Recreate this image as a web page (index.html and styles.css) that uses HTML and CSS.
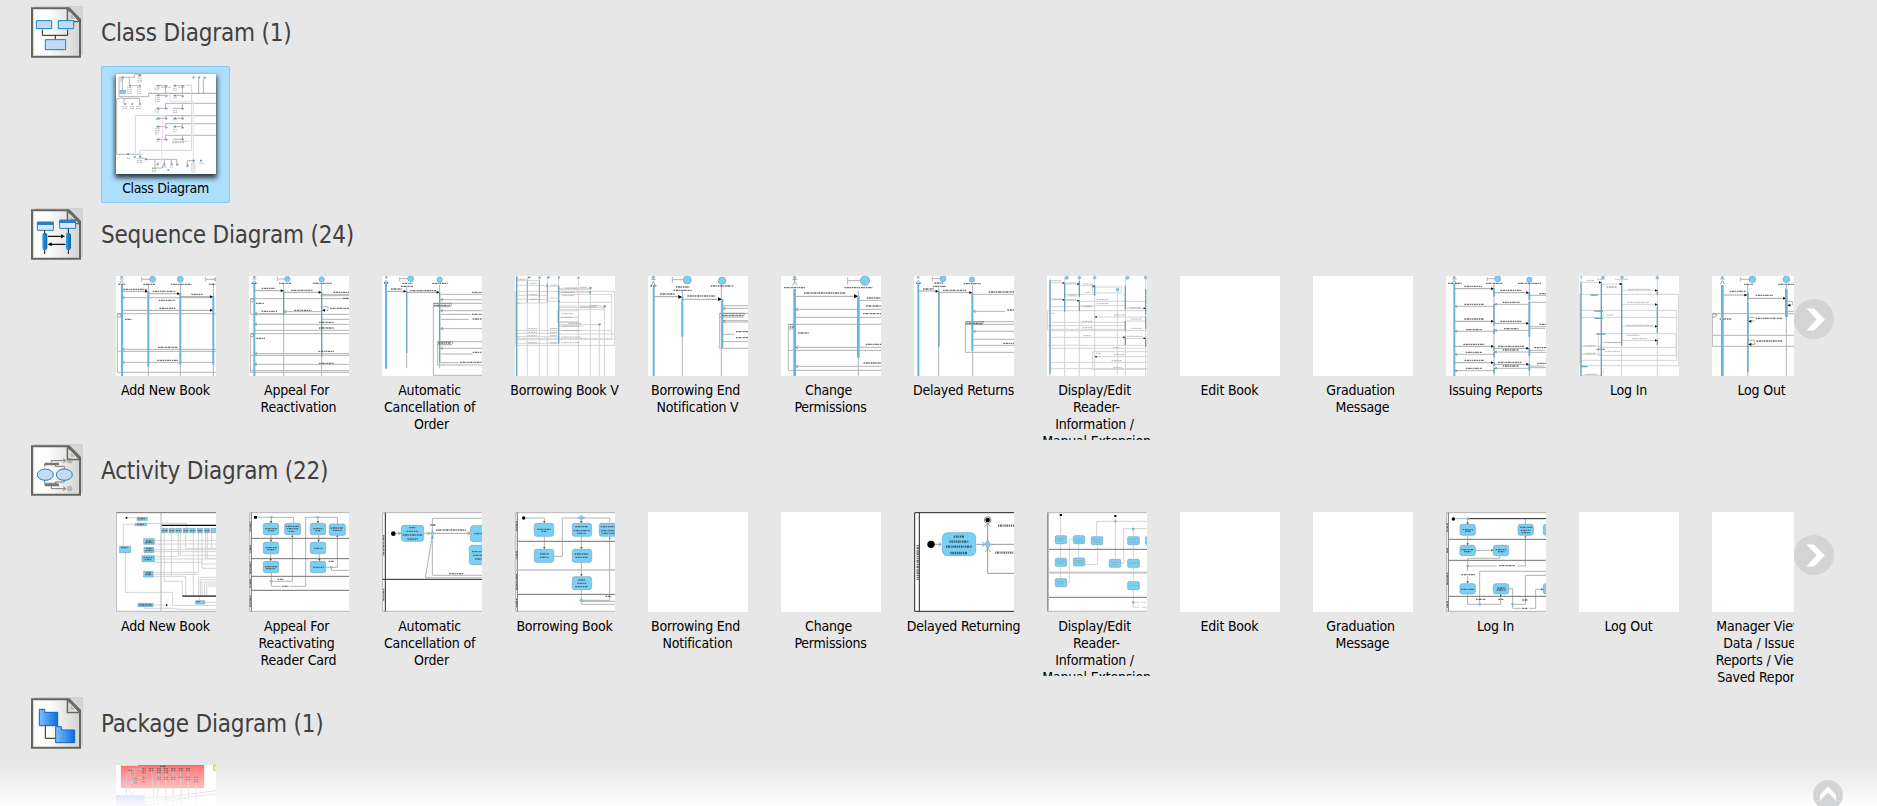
FILE: index.html
```html
<!DOCTYPE html>
<html lang="en">
<head>
<meta charset="utf-8">
<title>Diagrams</title>
<link rel="stylesheet" href="styles.css">
</head>
<body>
<svg class="defs" aria-hidden="true">
  <defs>
    <linearGradient id="paper" x1="0" x2="1"><stop offset="0" stop-color="#fff"/><stop offset=".35" stop-color="#fcfcfc"/><stop offset="1" stop-color="#d4d4d4"/></linearGradient>
    <linearGradient id="bar" x1="0" x2="1"><stop offset="0" stop-color="#3aa0e0"/><stop offset="1" stop-color="#0068b0"/></linearGradient>
    <linearGradient id="folder" x1="0" x2="1"><stop offset="0" stop-color="#7fc0ff"/><stop offset="1" stop-color="#0a6cdc"/></linearGradient>
    <g id="page">
      <path d="M12 1H154V145H12Z" fill="#d5d7d7" stroke="#c3c7c6" stroke-width="2"/>
      <path d="M3 7H114L147 40V152H3Z" fill="url(#paper)"/>
      <path d="M109 8V47H147Z" fill="#c8c8c8" stroke="#66655e" stroke-width="4"/>
      <path d="M117 20L136 40H117Z" fill="#b9b9b9" stroke="#eee" stroke-width="3"/>
      <path d="M3 7H114L147 40V152H3Z" fill="none" stroke="#66655e" stroke-width="6"/>
      <path d="M8 11V148" stroke="#bdbdb8" stroke-width="2"/>
    </g>
  </defs>
</svg>
<main class="browser">

<section class="group group-class">
  <header><svg class="icon" viewBox="0 0 156 156"><use href="#page"/>
    <g fill="#c5daf1" stroke="#0f83c9" stroke-width="3"><path d="M16 44H62V68H16ZM82 44H128V68H82ZM43 101H104V131H43Z"/></g>
    <path d="M34 71V88H110V71M73 88V99" fill="none" stroke="#222" stroke-width="3"/></svg><h2>Class Diagram (1)</h2></header>
  <ul class="items">
    <li class="item selected"><svg class="thumb" viewBox="348 222 300 300">
      <path class="g" d="M357 234V290H446V280M357 232H403V223H425M367 235V270M388 235V252M365 293L350 297V463H425M372 297V310M365 295H419V310M388 257H415M468 257H500M497 257V280M520 257H548M547 258V280M466 286H500M520 286H548M497 325V310H648M547 325V310M468 325H497M520 325H547M497 353V347H648M547 353V347M468 355H497M520 355H547M497 380V371H648M547 380V371M468 380H497M520 380H547M497 418V406H648M547 418V406M468 418H497M520 418H547M596 235V280M610 235V280M420 470L437 478H530V492M465 478V505M493 478V500M514 478V492M562 494V482H580V490M456 504H488V495"/>
      <path class="k" d="M446 280H648"/>
      <path class="pu" d="M547 256H575V451H419V465M497 347H406V468"/>
      <path class="pk" d="M495 286H511V304H580V480M497 353H488V420H485V488H470"/>
      <path class="t faint" d="M360 237h11M360 243h9M413 229h12M413 235h12M413 241h12M413 246h12M381 262h14M381 268h14M381 274h14M381 280h14M411 262h12M411 268h12M411 275h12M411 281h12M464 264h16M464 269h12M519 265h11M519 271h11M483 262h30M536 262h18M464 293h15M464 299h15M464 305h15M519 294h12M367 320h15M367 326h15M389 320h13M389 326h13M408 320h14M408 326h14M464 330h15M464 336h13M519 331h12M519 337h12M468 359h12M519 359h12M465 386h14M465 392h14M465 398h12M465 403h8M519 388h12M519 395h10M468 425h10M517 424h50M517 428h35M411 476h14M411 482h16M411 488h16M456 505h12M456 510h12M456 515h12M573 492h13M573 498h13M573 504h13M573 510h13M558 500h9M488 501h12M510 501h9M597 490h14M380 475h10M574 516h12"/>
      <path class="d" d="M472 257h6M496 258h6M522 257h6M545 258h6M472 286h6M496 288h6M522 287h6M545 289h6M472 325h6M496 326h6M545 326h6M472 355h6M496 356h6M522 355h6M545 356h6M472 380h6M496 383h6M522 380h6M545 383h6M472 418h6M496 419h6M545 418h6M416 226h6M365 232h6M387 257h6M416 257h6M372 312h6M394 312h6M417 312h6M578 232h6M595 232h6M611 233h6M381 462h6M401 471h6M417 470h6M435 478h6M470 493h6M490 493h6M512 493h6M529 494h6M560 496h6M578 482h6M600 482h6M502 510h6"/>
      <path class="n" d="M360 271H377V280H360Z"/></svg><p class="label">Class Diagram</p></li>
  </ul>
</section>

<section class="group group-sequence">
  <header><svg class="icon" viewBox="0 0 156 156"><use href="#page"/>
    <path d="M19 42H67V67H19ZM86 36H134V61H86Z" fill="#dce8f8" stroke="#1f80c8" stroke-width="3"/>
    <path d="M19 42H67V51H19ZM86 36H134V45H86Z" fill="#287fc7"/>
    <path d="M41 68V138M112 62V138" stroke="#111" stroke-width="3"/>
    <path d="M36 75h10l3 5v40l-4 6h-8l-3-6V80Z" fill="url(#bar)"/><path d="M107 75h10l3 5v40l-4 6h-8l-3-6V80Z" fill="url(#bar)"/>
    <path d="M51 85H92M60 109H103" stroke="#111" stroke-width="4"/><path d="M90 79l12 6-12 6zM62 103l-12 6 12 6z"/></svg><h2>Sequence Diagram (24)</h2></header>
  <div class="strip">
  <ul class="items">
    <li class="item"><svg class="thumb" viewBox="348 228 300 300">
      <path class="g" d="M445 250V528M541 250V528M640 250V528M366 293H640M366 448H648M366 487H640M425 231V245M425 238H450M616 231V245M616 238H642M648 341H352V517H648M352 454H648"/>
      <path class="k" d="M366 274H440M445 281H536M541 290H636M366 331H636M360 250L365 242L370 250M360 237H370M353 342h10v9h-10"/>
      <path class="f" d="M445 274l-10-4v8zM541 281l-10-4v8zM640 290l-10-4v8zM640 331l-10-4v8z"/><path class="k" d="M374 289l-8 4 8 4M374 444l-8 4 8 4M374 483l-8 4 8 4"/>
      <path class="b" d="M366 255V528M445 273V500M541 280V494M640 289V494"/>
      <path class="t" d="M355 253h22M430 253h35M512 253h64M627 253h21M370 268h70M458 274h68M574 283h34M476 301h48M478 325h48M375 358h22M474 442h58M472 481h62"/>
      <g class="n"><circle cx="458" cy="238" r="9"/><circle cx="541" cy="238" r="9"/><circle cx="648" cy="238" r="5"/><circle cx="365" cy="231" r="3"/></g></svg><p class="label">Add New Book</p></li>

    <li class="item"><svg class="thumb" viewBox="747 228 300 300">
      <path class="g" d="M851 250V528M965 250V528M832 230V243M832 237H855M965 283H1047M965 287H1047M1047 296H751V343H1047M763 341H851M851 335H965M763 373H1047M965 358H1047M763 391H1047M1047 401H751V517H1047M763 461H1047M751 466H1047M763 493H1047M751 512H1047M968 320H984V331H970"/>
      <path class="k" d="M763 272H848M851 277H961M757 250L763 242L769 250M757 237H769M752 297h9v8h-9M752 402h9v8h-9"/>
      <path class="f" d="M851 272l-9-4v8zM965 277l-9-4v8zM966 331l9-4v8z"/><path class="k" d="M771 337l-8 4 8 4M859 331l-8 4 8 4M771 369l-8 4 8 4M771 457l-8 4 8 4M771 489l-8 4 8 4"/>
      <path class="b" d="M763 250V528"/><path class="b2" d="M851 270V344M965 277V470"/>
      <path class="t" d="M754 250h18M837 250h36M939 250h56M785 265h42M873 271h66M1000 277h47M1030 295h15M768 310h24M785 334h46M883 331h52M990 325h57M957 367h45M957 384h45M769 415h26M955 454h47M957 490h45"/>
      <g class="n"><circle cx="862" cy="237" r="8"/><circle cx="965" cy="238" r="8"/><circle cx="763" cy="231" r="3"/></g></svg><p class="label">Appeal For 
Reactivation</p></li>

    <li class="item"><svg class="thumb" viewBox="36 33 300 300">
      <path class="g" d="M110 65V310M209 60V310M89 36V48M89 41H118M212 88H336M212 104H336M212 137H336M212 148H302M212 163H296M212 191H336M212 250H336M212 267H308M212 293H264M336 115H190V331H336M336 230H203V300H336"/>
      <path class="k" d="M49 79H106M110 82H206M43 55L49 46L55 55M190 115h54v6l-5 4h-49M203 230h45v5l-4 4h-41M219 100l-7 4 7 4M219 133l-7 4 7 4M219 187l-7 4 7 4M219 246l-7 4 7 4"/>
      <path class="f" d="M110 79l-9-4v8zM209 82l-9-4v8z"/>
      <path class="b" d="M48 57V311"/><path class="b2" d="M110 78V264M209 82V294"/>
      <path class="t" d="M42 54h12M97 55h30M93 64h36M187 55h46M63 72h32M120 77h78M306 82h30M192 121h50M306 148h30M308 162h28M205 234h37M308 262h28M270 292h66"/>
      <g class="n"><circle cx="122" cy="41" r="9"/><circle cx="209" cy="44" r="8"/><circle cx="49" cy="37" r="3"/></g></svg><p class="label">Automatic 
Cancellation of 
Order</p></li>

    <li class="item"><svg class="thumb" viewBox="435 33 300 300">
      <path class="g2" d="M440 36V333M472 36V333M508 36V333M532 36V333M566 36V333M625 36V333M661 66V333M688 178V333M703 120V333M440 47H508M440 61H532M440 91H532M440 103H532M440 114H532M532 64H566M532 99H566M532 109H566M566 70H660M566 74H660M566 82H660M734 79H436V241H734V79M567 88H725V220H436M567 123H705M567 128H705M567 134H705M567 112H725M567 157H625M567 170H625M567 179H688M567 184H625M567 196H725M567 207H734M436 196H566M436 205H566M436 215H566M436 224H566M436 235H566M567 223H734M562 137H625V173H562Z"/>
      <path class="b2" d="M440 40V333M566 62V236"/><path class="b3" d="M472 46V112M508 46V112M532 54V112"/>
      <path class="t2" d="M443 43h27M478 55h25M478 89h25M478 103h25M540 60h24M585 69h40M630 67h20M575 82h40M575 92h40M660 122h26M630 126h50M575 146h35M575 157h35M595 175h40M575 183h60M475 191h26M540 191h22M475 202h26M540 202h22M475 212h26M540 212h22M475 233h26M540 233h22M575 197h55M575 216h58M575 233h54M438 115h10M438 86h10"/>
      <path class="d" d="M474 37h7M506 38h6M532 37h7M564 37h5M623 38h5M658 69h7M658 82h5M701 124h7M685 178h7M530 63h4M564 109h5M438 37h5"/></svg><p class="label">Borrowing Book V</p></li>

    <li class="item"><svg class="thumb" viewBox="834 33 300 300">
      <path class="g" d="M937 75V333M1054 60V333M907 35V54M907 44H942M1058 122H1134M1058 130H1134M1058 167H1134M1058 171H1134M1058 208H1094M1058 230H1134M1134 145H1049V250H1134"/>
      <path class="k" d="M852 95H932M937 103H1049M844 62L850 49L857 62M844 44H857M1049 145h75l-5 11h-70M1067 126l-8 4 8 4M1067 165l-8 4 8 4"/>
      <path class="f" d="M937 96l-12-6v11zM1056 103l-12-6v11z"/>
      <path class="b" d="M851 66V333M937 94V215M1057 102V248"/>
      <path class="t" d="M841 63h18M917 66h41M911 76h54M1022 63h68M870 87h45M952 93h86M1056 151h62M1098 200h36M1098 218h36"/>
      <g class="n"><circle cx="952" cy="45" r="12"/><circle cx="1056" cy="47" r="11"/><circle cx="850" cy="37" r="4"/></g></svg><p class="label">Borrowing End 
Notification V</p></li>

    <li class="item"><svg class="thumb" viewBox="63 33 300 300">
      <path class="g" d="M295 75V333M263 36V59M263 47H302M298 106H363M107 133H363M107 157H363M85 178H363M107 247H363M85 256H363M107 304H363M363 316H85V178"/>
      <path class="k" d="M107 94H288M97 62L104 51L112 62M97 44H112M104 40V52M86 179h16v8l-4 5h-12"/>
      <path class="f" d="M295 94l-13-6v12z"/><path class="k" d="M115 128l-8 5 8 5M115 242l-8 5 8 5M115 299l-8 5 8 5"/>
      <path class="b w" d="M104 72V333M295 94V278"/>
      <path class="t" d="M72 68h64M253 68h86M132 84h125M320 99h43M318 123h45M309 146h54M89 186h12M114 204h32M317 238h46M311 294h52"/>
      <g class="n"><circle cx="315" cy="47" r="14"/><circle cx="104" cy="38" r="4"/></g></svg><p class="label">Change 
Permissions</p></li>

    <li class="item"><svg class="thumb" viewBox="462 33 300 300">
      <path class="g" d="M536 67V333M638 60V333M517 35V48M517 41H542M640 88H762M640 139H735M640 178H762M640 199H762M640 223H762M640 241H762M762 170H616V262H762"/>
      <path class="k" d="M475 78H530M536 82H632M468 55L475 46L482 55M616 170h55l-4 8h-51M647 135l-7 4 7 4M647 195l-7 4 7 4"/>
      <path class="f" d="M536 79l-9-4v8zM637 83l-9-4v8z"/>
      <path class="b" d="M475 57V333M637 83V257"/><path class="b2" d="M537 79V245"/>
      <path class="t" d="M468 55h14M523 54h28M518 64h40M611 56h52M489 72h32M549 76h72M686 81h76M742 135h20M618 175h50M730 235h32"/>
      <g class="n"><circle cx="549" cy="41" r="9"/><circle cx="636" cy="44" r="8"/><circle cx="475" cy="37" r="3"/></g></svg><p class="label">Delayed Returns</p></li>

    <li class="item"><svg class="thumb" viewBox="861 33 300 300">
      <path class="g2" d="M870 40V333M914 40V333M958 40V333M1004 40V333M1072 76V330M1096 40V333M1157 40V333M870 53H914M914 57H958M958 62H1004M914 93H958M914 88H1004M870 104H914M914 107H958M958 109H1157M958 122H1096M870 125H1004M1096 130H1157M997 66H1084V84H997ZM1161 137H863V197H1161M870 172H1096M863 182H1096M870 193H1096M1004 156H1157M1096 168H1157M870 217H1096M1096 220H1157M863 241H1161M870 250H1161M1161 260H998V313H1161M1004 275H1161M870 292H1161M870 311H1161"/>
      <path class="b2" d="M870 45V328M914 54V140M958 47V95M958 105V137M1004 60V92M1096 62V134M1157 72V150M1096 215V240M1157 154V192M1157 218V245M1096 168V197"/>
      <path class="t2" d="M874 47h30M920 54h28M970 57h30M874 102h30M920 104h28M975 82h16M1010 104h36M1010 116h36M974 125h20M1108 128h34M1062 150h35M967 169h30M967 188h30M1112 162h34M1112 190h34M970 212h24M1102 214h46M1059 248h18M1055 287h30M1060 308h26M1062 269h34M872 145h12M1008 265h14M926 90h20"/>
      <path class="f" d="M914 54l-6-3v6zM958 57l-6-3v6zM1004 64l-6-3v6zM1157 130l-6-3v6zM914 104l-6-3v6zM958 107l-6-3v6zM1096 217l-6-3v6zM1157 220l-6-3v6zM1004 156l6-3v6zM1004 275l6-3v6z"/>
      <g class="n"><circle cx="920" cy="38" r="5"/><circle cx="958" cy="38" r="4"/><circle cx="1004" cy="38" r="4"/><circle cx="1102" cy="38" r="5"/><circle cx="1157" cy="38" r="4"/><circle cx="1073" cy="74" r="4"/></g></svg><p class="label">Display/Edit 
Reader-
Information / 
Manual Extension</p></li>

    <li class="item"><div class="thumb"></div><p class="label">Edit Book</p></li>
    <li class="item"><div class="thumb"></div><p class="label">Graduation 
Message</p></li>

    <li class="item"><svg class="thumb" viewBox="48 33 300 300">
      <path class="g" d="M192 55V333M298 55V333M172 36V48M172 41H198M300 91H348M192 118H298M75 124H192M300 112H348M300 185H348M300 190H345M192 196H298M75 199H192M300 256H345M300 262H348M192 261H298M75 268H192M300 303H345M300 308H348M192 310H298M75 317H192"/>
      <path class="k" d="M75 71H188M194 83H294M75 169H188M194 175H294M75 244H188M194 250H294M75 293H188M194 298H294M67 56L73 46L80 56M67 42H80M82 121l-7 3 7 3M82 196l-7 3 7 3M82 265l-7 3 7 3M82 314l-7 3 7 3M201 115l-7 3 7 3M201 193l-7 3 7 3M201 258l-7 3 7 3M201 307l-7 3 7 3"/>
      <path class="f" d="M192 71l-9-4v8zM298 83l-9-4v8zM192 169l-9-4v8zM298 175l-9-4v8zM192 244l-9-4v8zM298 250l-9-4v8zM192 293l-9-4v8zM298 298l-9-4v8z"/>
      <path class="b" d="M73 57V333M298 82V104M298 111V215M298 250V272M298 297V317"/><path class="b2" d="M192 69V95M192 117V182M192 192V207M192 243V257M192 261V276M192 291V303M192 309V325"/>
      <path class="t" d="M54 55h42M168 55h51M264 55h71M103 64h53M211 76h65M328 86h20M218 112h52M103 118h59M103 162h58M211 169h65M328 178h20M222 191h44M108 194h49M100 238h64M204 244h78M313 248h35M218 255h48M107 262h50M103 286h60M204 292h72M322 295h26M218 303h50M107 310h50"/>
      <g class="n"><circle cx="203" cy="41" r="9"/><circle cx="298" cy="44" r="8"/><circle cx="73" cy="37" r="3"/></g></svg><p class="label">Issuing Reports</p></li>

    <li class="item"><svg class="thumb" viewBox="447 33 300 300">
      <path class="g2" d="M453 40V333M514 40V333M575 40V333M682 40V333M448 88H746V302H448ZM448 136H740V286H448M448 157H740M505 206H738V271H505ZM505 247H738M514 57H575M577 76H682M577 118H682M577 184H682M577 226H682M453 52H514M514 233H575M453 244H514M453 268H514M453 331H514M520 145V152H514M520 317V323H514"/>
      <path class="b2" d="M453 52V333M514 52V333M575 55V242M682 75V90M682 118V204M682 224V240M481 90H503M493 138H519M493 160H519M499 207H526M499 253H526M450 305H473"/>
      <path class="t2" d="M470 46h22M530 65h30M530 68h30M595 73h64M592 112h66M588 181h80M528 150h22M590 211h40M606 221h46M526 232h50M526 259h44M464 242h32M464 265h34M466 328h36M556 43h40M502 43h24"/>
      <path class="f" d="M577 57l-8-4v8zM682 76l-7-3v7zM682 118l-7-3v7zM682 184l-7-3v7zM682 226l-7-3v7zM514 52l-7-3v7z"/>
      <g class="n"><circle cx="519" cy="37" r="4"/><circle cx="576" cy="37" r="4"/><circle cx="682" cy="38" r="4"/><circle cx="454" cy="36" r="2"/></g></svg><p class="label">Log In</p></li>

    <li class="item"><svg class="thumb" viewBox="846 33 300 300">
      <path class="g" d="M953 60V333M1069 60V333M931 36V49M931 43H958M1072 109H1088V121M1072 139H1092M1146 146H847V244H1146M847 211H1146M954 157H974M954 169V157M954 226H974V239"/>
      <path class="k" d="M880 90H946M954 100H1064M871 58L877 47L884 58M871 42H884M848 147h11v6l-4 3h-7M974 168H962M974 238H962M1084 121H1075"/>
      <path class="f" d="M953 90l-10-4v8zM1069 100l-10-4v8zM954 169l10-4v8zM954 238l10-4v8zM1071 121l10-4v8z"/>
      <path class="b w" d="M877 60V158M877 165V333M1069 72V156"/><path class="b2" d="M954 82V107M954 111V322"/>
      <path class="t" d="M942 58h27M1044 58h50M899 79h50M977 91h52M977 160h80M869 162h34M979 228h78"/>
      <g class="n"><circle cx="967" cy="43" r="10"/><circle cx="1069" cy="43" r="10"/><circle cx="877" cy="37" r="3"/></g></svg><p class="label">Log Out</p></li>
  </ul>
  <button class="next" aria-label="Next"><svg viewBox="0 0 40 40"><path d="M12.5 9.5H20L31 20.5L20 31.5H12.5L22.5 20.5Z"/></svg></button>
  </div>
</section>

<section class="group group-activity">
  <header><svg class="icon" viewBox="0 0 156 156"><use href="#page"/>
    <path d="M61 55V50H102M41 68V60H80M73 62V67H100V76M41 107V118H80M61 124V134H102M73 122V114H100V106" fill="none" stroke="#7c7c78" stroke-width="3"/>
    <path d="M41 60H84M41 123H84" stroke="#777" stroke-width="7"/>
    <path d="M96 44l9 6-9 6M96 128l9 6-9 6" fill="none" stroke="#888" stroke-width="3"/>
    <g fill="none" stroke="#888" stroke-width="2"><circle cx="116" cy="50" r="7"/><circle cx="116" cy="50" r="3"/><circle cx="116" cy="134" r="7"/><circle cx="116" cy="134" r="3"/></g>
    <g fill="#c5daf1" stroke="#0f83c9" stroke-width="3"><ellipse cx="43" cy="92" rx="24" ry="17"/><ellipse cx="100" cy="92" rx="24" ry="17"/></g></svg><h2>Activity Diagram (22)</h2></header>
  <div class="strip">
  <ul class="items">
    <li class="item"><svg class="thumb" viewBox="348 231 300 300">
      <path class="g2" d="M493 292V439H547V482M514 292V424H557V482M535 292V361H648M541 292V361M557 292V340H648M580 292V482M595 292V412H460M606 292V400H648M617 292V370H648M622 292V370M635 292V340M463 316H648M463 327H648M461 344H648M461 350H648M463 364H535M463 372H648M463 382H606V387H648M460 418H595M458 424H514M596 482V427H648M601 482V434H648M606 482V441H648M613 482V447H648M620 482V453H648M376 352V472H518V511H648M370 335V268H405M440 265H560V280M418 256V264M382 248H410M598 485V495M614 502H648M458 510H500M432 513V520H530V523H648"/>
      <path class="g" d="M349 529V233M648 529H349M483 233V529"/><path class="gd" d="M349 233H648"/>
      <path class="f" d="M485 269H648V273H485ZM377 246h5v5h-5zM498 508h4v4h-4z"/><path class="f soft" d="M547 481H648V486H547Z"/>
      <path class="n" d="M411 247H442V256H411ZM405 265H440V272H405ZM485 280H503V293H485ZM507 280H523V293H507ZM527 280H544V293H527ZM549 280H565V293H549ZM569 280H586V293H569ZM592 280H608V293H592ZM613 280H629V293H613ZM633 280H648V293H633ZM431 311H463V328H431ZM432 337H461V353H432ZM426 362H463V380H426ZM431 409H459V426H431ZM359 334H392V353H359ZM414 505H459V515H414ZM587 497H614V507H587Z"/>
      <path class="t" d="M415 251h22M412 268h20M363 338h20M438 318h20M436 323h24M438 341h20M436 347h24M430 368h30M434 374h22M438 414h16M436 419h18M418 510h38M590 500h10M487 287h14M509 287h12M529 287h12M551 287h12M571 287h12M594 287h12M615 287h12"/></svg><p class="label">Add New Book</p></li>

    <li class="item"><svg class="thumb" viewBox="747 231 300 300">
      <path class="g" d="M768 247H881V264M814 250V264M877 300V439H814M813 300V320M812 357V378M814 414V454H842M870 454H917V247H1012V267M954 250V264M956 300V320M958 357V378M977 397H1012V300M994 400V406H1047"/>
      <path class="g" d="M1047 233H748V529H1047"/><path class="gd" d="M754 233V529M754 310H1047M754 371H1047M754 424H1047M754 466H1047"/>
      <g class="n"><rect x="790" y="265" width="46" height="34" rx="6"/><rect x="854" y="265" width="48" height="34" rx="6"/><rect x="931" y="265" width="46" height="34" rx="6"/><rect x="988" y="267" width="48" height="34" rx="6"/><rect x="790" y="322" width="46" height="34" rx="6"/><rect x="931" y="322" width="46" height="34" rx="6"/><rect x="790" y="379" width="46" height="34" rx="6"/><rect x="931" y="379" width="46" height="34" rx="6"/><path d="M814 243l4 4-4 4-4-4zM953 243l4 4-4 4-4-4zM814 435l4 4-4 4-4-4zM994 393l4 4-4 4-4-4z"/></g>
      <path class="f" d="M762 243h9v8h-9z"/><path class="f soft" d="M813 265l-4-7h8zM954 265l-4-7h8zM813 321l-4-7h8zM956 321l-4-7h8zM812 378l-4-7h8zM958 378l-4-7h8zM877 300l-3 6h6zM1012 300l-3 6h6z"/>
      <path class="t" d="M795 281h38M804 287h20M857 274h40M860 281h34M866 289h18M940 281h30M946 287h16M992 279h38M998 286h28M797 338h34M802 344h24M942 340h26M795 395h38M798 401h28M940 397h32M986 379h15M833 433h18M846 454h20M751 260v30M751 330v24M751 380v36M751 432v26M751 482v34"/></svg><p class="label">Appeal For 
Reactivating 
Reader Card</p></li>

    <li class="item"><svg class="thumb" viewBox="36 36 300 300">
      <path class="g" d="M336 226H187V108L166 233H336M187 95V55H336M78 100H92M162 100H180"/><path class="g" d="M336 38H38V334H336"/>
      <path class="k" d="M193 100H298M292 95l8 5-8 5M84 96l8 4-8 4M172 95l8 5-8 5M184 116l3-8 4 8"/>
      <path class="kk" d="M46 38V334M38 238H336"/>
      <g class="n"><rect x="94" y="76" width="67" height="48" rx="9"/><rect x="301" y="77" width="50" height="48" rx="9"/><rect x="298" y="136" width="50" height="58" rx="9"/><path d="M187 92l5 8-5 8-5-8z"/></g>
      <circle class="f" cx="70" cy="101" r="7"/>
      <path class="t" d="M117 83h20M110 94h34M98 105h60M112 117h32M180 75h18M198 90h90M312 101h24M306 155h30M309 166h27M315 177h21M238 221h44M41 105v62M41 266v38"/></svg><p class="label">Automatic 
Cancellation of 
Order</p></li>

    <li class="item"><svg class="thumb" viewBox="435 36 300 300">
      <path class="g" d="M461 54H523V68M523 110V146M552 169H577V54H719V68M634 56V68M634 110V146M634 188V228M634 270V298M634 303V313H735M634 301H719V112M634 304H735"/>
      <path class="g" d="M735 38H436V334H735"/><path class="gd" d="M442 38V334M442 124H735M442 283H735"/><path class="gb" d="M436 210H735"/>
      <g class="n"><rect x="493" y="70" width="58" height="39" rx="7"/><rect x="607" y="70" width="58" height="39" rx="7"/><rect x="688" y="70" width="58" height="39" rx="7"/><rect x="493" y="148" width="58" height="39" rx="7"/><rect x="607" y="148" width="58" height="39" rx="7"/><rect x="607" y="230" width="58" height="39" rx="7"/><path d="M634 45l3 5 7 3-7 3-3 5-3-5-7-3 7-3zM634 296l5 5-5 5-5-5z"/></g>
      <circle class="f" cx="461" cy="54" r="5"/><path class="f soft" d="M523 69l-4-6h8zM634 69l-4-6h8zM523 147l-4-6h8zM634 147l-4-6h8zM634 229l-4-6h8zM719 111l-3 5h6z"/>
      <path class="t" d="M502 88h40M514 94h16M616 80h36M611 92h48M621 100h26M692 80h43M693 92h42M695 100h40M510 162h26M509 172h26M614 162h42M616 172h38M625 240h20M622 250h28M616 260h36M706 289h18M440 64v30M440 154v24M440 222v50M440 296v26"/></svg><p class="label">Borrowing Book</p></li>

    <li class="item"><div class="thumb"></div><p class="label">Borrowing End 
Notification</p></li>
    <li class="item"><div class="thumb"></div><p class="label">Change 
Permissions</p></li>

    <li class="item"><svg class="thumb" viewBox="102 36 300 300">
      <path class="g s" d="M331 133H402M323 145V220H402M323 120V72M164 133H182M288 133H313"/>
      <path class="k" d="M176 127l8 6-8 6M306 126l9 7-9 7M315 80l8-9 9 9M315 156l8-9 9 9"/>
      <path class="kk" d="M402 38H104V334H402M118 38V334"/>
      <g class="n"><rect x="187" y="98" width="100" height="69" rx="15"/><path d="M323 119l8 14-8 14-8-14z"/></g>
      <circle class="f" cx="153" cy="133" r="11"/><circle class="ring" cx="323" cy="60" r="10"/><circle class="f" cx="323" cy="60" r="7"/>
      <path class="t bold" d="M221 110h32M208 125h58M198 140h78M211 159h52M354 77h48M345 158h57M113 135v105"/></svg><p class="label">Delayed Returning</p></li>

    <li class="item"><svg class="thumb" viewBox="501 36 300 300">
      <path class="g2" d="M542 48V105M542 132V174M542 201V234M562 247H568V118H578M596 132V172M614 193H653V136M650 108V64H801M706 50V176M723 190H731V86H801M760 90V108M760 134V176M760 202V242M760 270V322H778M765 307H778M785 322H800"/>
      <path class="g" d="M801 38H502V334H801"/><path class="gd" d="M504 38V334M507 148H801M507 292H801"/><path class="gb" d="M507 218H801"/>
      <g class="n"><rect x="526" y="107" width="34" height="24" rx="4"/><rect x="580" y="107" width="34" height="24" rx="4"/><rect x="634" y="110" width="34" height="24" rx="4"/><rect x="743" y="110" width="35" height="24" rx="4"/><rect x="797" y="110" width="35" height="24" rx="4"/><rect x="526" y="175" width="34" height="24" rx="4"/><rect x="580" y="174" width="34" height="24" rx="4"/><rect x="688" y="178" width="34" height="24" rx="4"/><rect x="743" y="178" width="35" height="24" rx="4"/><rect x="526" y="236" width="34" height="24" rx="4"/><rect x="743" y="245" width="35" height="24" rx="4"/><path d="M706 60l4 4-4 4-4-4zM760 83l4 4-4 4-4-4zM760 303l4 4-4 4-4-4z"/></g>
      <path class="f" d="M539 42h7v6h-7zM703 45h6v6h-6z"/>
      <path class="t2" d="M530 116h26M534 122h16M584 117h24M586 124h22M638 120h26M640 127h20M748 118h24M748 126h24M530 184h26M534 190h16M584 182h26M584 188h26M694 187h22M697 193h16M748 190h26M530 245h26M535 251h16M750 257h20M785 307h12"/></svg><p class="label">Display/Edit 
Reader-
Information / 
Manual Extension</p></li>

    <li class="item"><div class="thumb"></div><p class="label">Edit Book</p></li>
    <li class="item"><div class="thumb"></div><p class="label">Graduation 
Message</p></li>

    <li class="item"><svg class="thumb" viewBox="48 36 300 300">
      <path class="g" d="M70 56H113V72M113 108V134M136 151H190M209 168V175H113V198H200M262 198H286V108M113 201V214M113 228V249M113 283V313H212V283M149 310V214H348M236 266H248V325H275M298 325H317V268H340M248 313H286V226H348M286 72V56"/>
      <path class="g" d="M348 38H49V334H348"/><path class="gd" d="M55 38V334M55 118H348M55 181H348M55 289H348"/><path class="kk" d="M113 56H348"/>
      <g class="n"><rect x="90" y="73" width="46" height="33" rx="7"/><rect x="264" y="73" width="46" height="33" rx="7"/><rect x="340" y="73" width="46" height="33" rx="7"/><rect x="90" y="136" width="46" height="31" rx="7"/><rect x="190" y="136" width="46" height="31" rx="7"/><rect x="90" y="251" width="46" height="31" rx="7"/><rect x="190" y="251" width="46" height="31" rx="7"/><rect x="340" y="251" width="46" height="31" rx="7"/><path d="M113 52l4 4-4 4-4-4zM113 194l4 4-4 4-4-4zM149 309l4 4-4 4-4-4zM248 309l4 4-4 4-4-4z"/></g>
      <circle class="f" cx="70" cy="57" r="5"/><path class="f soft" d="M113 73l-4-6h8zM113 136l-4-6h8zM113 250l-4-6h8zM190 151l-6-4v8zM340 268l-6-4v8zM286 107l-3 5h6zM212 283l-3 5h6z"/>
      <path class="t" d="M98 89h32M105 94h18M270 82h36M272 91h30M274 98h26M93 149h38M102 155h22M197 149h32M204 155h20M207 197h50M94 224h42M93 268h40M202 264h24M200 270h28M138 298h30M205 298h16M277 300h16M277 325h16M52 70v26M52 144v14M52 218v36M52 304v20"/></svg><p class="label">Log In</p></li>

    <li class="item"><div class="thumb"></div><p class="label">Log Out</p></li>
    <li class="item tall"><div class="thumb"></div><p class="label">Manager View 
Data / Issue 
Reports / View 
Saved Reports</p></li>
  </ul>
  <button class="next" aria-label="Next"><svg viewBox="0 0 40 40"><path d="M12.5 9.5H20L31 20.5L20 31.5H12.5L22.5 20.5Z"/></svg></button>
  </div>
</section>

<section class="group group-package">
  <header><svg class="icon" viewBox="0 0 156 156"><use href="#page"/>
    <path d="M43 85V124H74" fill="none" stroke="#222" stroke-width="3"/>
    <g fill="url(#folder)" stroke="#0864ce" stroke-width="3"><path d="M25 37H41V46H80V86H25Z"/><path d="M74 89H91V99H131V137H74Z"/></g></svg><h2>Package Diagram (1)</h2></header>
  <ul class="items">
    <li class="item"><svg class="thumb" viewBox="348 240 300 300">
      <path class="pkg-red" d="M364 240H611V308H364Z"/><path class="pkg-blue" d="M348 330H434V540H348Z"/><path class="pkg-note" d="M641 240H650V256H641Z"/><path class="pkg-tab" d="M364 240H414V243H364Z"/>
      <path class="g" d="M431 252H390V282M379 340V266L390 262M404 252V290M410 278H431M454 255L461 320V400M475 255L472 400M496 255L500 400M519 255L520 400M541 255L546 400M563 255L568 400M588 278V400M388 295V320L410 337H500L648 317M434 350L648 327M434 360L560 340"/>
      <path class="t" d="M480 244h18M427 251h10M427 257h10M427 263h10M448 251h12M448 257h12M471 251h12M471 257h12M471 263h12M492 251h12M492 257h12M492 263h12M514 251h12M514 257h12M536 251h12M536 257h12M558 251h12M558 257h12M386 256h10M402 280h10M402 287h10M402 294h10M427 277h10M427 283h10M427 291h10M471 277h12M471 283h12M492 277h12M492 283h12M514 277h12M514 283h12M536 277h12M558 277h12M558 284h12M582 277h12M582 284h12M582 291h12"/>
      <path class="n" d="M388 288H398V293H388Z"/></svg><p class="label">Package Diagram</p></li>
  </ul>
</section>
<div class="fade"></div>
<button class="up" aria-label="Scroll up"><svg viewBox="0 0 30 30"><path d="M7 15L15 6.5L23 15V20.5L15 12.5L7 20.5Z"/></svg></button>
</main>
</body>
</html>
```
FILE: styles.css
```css
* { box-sizing: border-box; }
html, body { margin: 0; height: 100%; overflow: hidden; }
body { background: #e7e7e7; color: #000; font-family: "DejaVu Sans Condensed", "DejaVu Sans", sans-serif; font-stretch: condensed; }
.defs { position: absolute; width: 0; height: 0; }
.browser { position: relative; height: 806px; overflow: hidden; padding-left: 31px; }

.group { display: flex; flex-direction: column; }
.group-class { height: 202px; }
.group-sequence { height: 236px; }
.group-activity { height: 253px; }
.group header { display: flex; align-items: flex-start; flex: none; gap: 18px; height: 66px; padding-top: 6px; }
.icon { width: 52px; height: 52px; flex: none; }
h2 { margin: 10px 0 0; font-size: 24px; line-height: 34px; font-weight: 400; color: #404040; letter-spacing: -0.2px; white-space: nowrap; }

.strip { display: flex; align-items: flex-start; padding-left: 70px; }
.items { display: flex; align-items: flex-start; gap: 4px; margin: 0; padding: 0; list-style: none; }
.group > .items { padding-left: 70px; }
.strip .items { width: 1693px; overflow: hidden; flex: none; }
.item { flex: none; width: 129px; height: 172px; padding: 8px 0 0; overflow: hidden; display: flex; flex-direction: column; align-items: center; }
.tall { height: 187px; }
.selected { height: 137px; padding: 7px 0 0; background: #addfff; border: 1px solid #84c8f4; border-radius: 2px; }
.thumb { display: block; width: 100px; height: 100px; flex: none; background: #fff; overflow: hidden; }
.selected .thumb { box-shadow: 0 3px 5px 1px rgba(0, 0, 0, .75); }
.label { margin: 6px 0 0; font-size: 14px; line-height: 17px; letter-spacing: -0.2px; text-align: center; white-space: pre; }
.selected .label { letter-spacing: -0.35px; }

.next, .up { display: block; padding: 0; border: 0; border-radius: 50%; background: #d2d4d5; }
.next { width: 40px; height: 40px; margin-top: 31px; flex: none; }
.next svg, .up svg { display: block; width: 100%; height: 100%; fill: #fff; }
.up { position: absolute; left: 1813px; top: 780px; width: 30px; height: 30px; }
.fade { position: absolute; left: 0; right: 0; top: 764px; height: 42px; background: linear-gradient(rgba(255, 255, 255, 0), rgba(255, 255, 255, .95)); }

.thumb path { fill: none; stroke-width: 3; }
.thumb .g { stroke: #b4b4b4; }
.thumb .s { stroke: #999; }
.thumb .g2 { stroke: #d4d4d4; }
.thumb .gd { stroke: #747474; }
.thumb .gb { stroke: #c0c0c0; stroke-width: 5; }
.thumb .k { stroke: #777; stroke-width: 2; }
.thumb .kk { stroke: #222; }
.thumb .f { fill: #000; stroke: none; }
.thumb .soft { fill: #555; }
.thumb .b { stroke: #68b6dc; stroke-width: 6; }
.thumb .w { stroke-width: 8; }
.thumb .b2 { stroke: #6aa4be; stroke-width: 4; }
.thumb .b3 { stroke: #86acbd; stroke-width: 3; }
.thumb .t { stroke: #444; stroke-width: 4; stroke-dasharray: 5 2 8 1.5 3 2; opacity: .75; }
.thumb .faint { stroke: #888; stroke-width: 3; opacity: .6; }
.thumb .bold { stroke: #222; stroke-width: 7; stroke-dasharray: 4 2 6 2 3 2; opacity: .65; }
.thumb .t2 { stroke: #999; stroke-width: 3; stroke-dasharray: 5 2 8 1.5; opacity: .7; }
.thumb .d { stroke: #6596ab; stroke-width: 5; }
.thumb .pu { stroke: #d3d0ff; }
.thumb .pk { stroke: #ffd0fa; }
.thumb .n, .thumb .n path { fill: #78d0f6; stroke: #7aa3b5; stroke-width: 2; }
.ring { fill: #fff; stroke: #555; stroke-width: 2; }
.thumb .pkg-red { fill: #ff7070; stroke: #a66; stroke-width: 2; }
.thumb .pkg-blue { fill: #a4a4ff; }
.thumb .pkg-note { fill: #ff5; stroke: #bb5; }
.thumb .pkg-tab { fill: #ddd; }
```
